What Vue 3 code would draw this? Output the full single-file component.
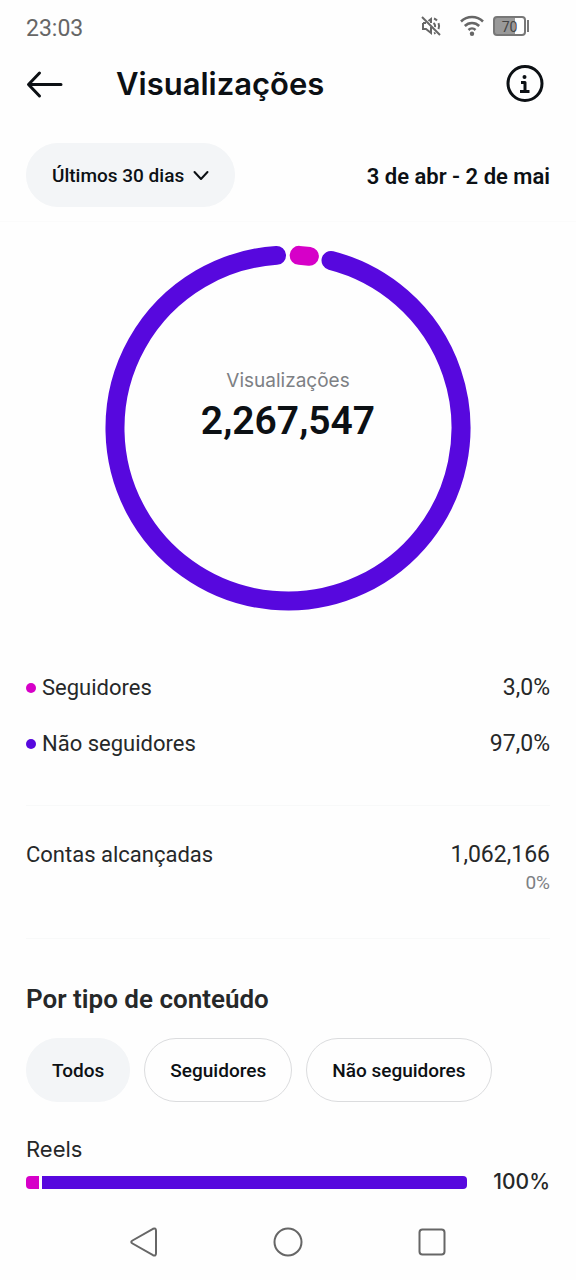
<script setup>
import { ref } from 'vue'

const title = 'Visualizações'
const total = '2,267,547'
const legend = [
  { name: 'Seguidores', value: '3,0%', tone: 'pink' },
  { name: 'Não seguidores', value: '97,0%', tone: 'violet' },
]
const tabs = ['Todos', 'Seguidores', 'Não seguidores']
const activeTab = ref('Todos')
const reels = { followers: 3, others: 97 }

const radius = 173
function arc(from, to) {
  const point = (deg) => {
    const a = (deg * Math.PI) / 180
    return `${(183 + radius * Math.sin(a)).toFixed(2)} ${(183 - radius * Math.cos(a)).toFixed(2)}`
  }
  const large = to - from > 180 ? 1 : 0
  return `M${point(from)}A${radius} ${radius} 0 ${large} 1 ${point(to)}`
}
</script>

<template>
  <div class="screen">
    <div class="status">
      <span class="clock">23:03</span>
      <div class="indicators">
        <svg class="mute" viewBox="0 0 22 22" width="22" height="22" aria-hidden="true">
          <path d="M3 8v6h3l5 4V12M11 8V4L8.500 6M3 8h3" />
          <path d="M13.500 8a4 4 0 0 1 1.500 4M14 3.500a8 8 0 0 1 3 2M18.500 8a8 8 0 0 1 0 6M14 18.500l1.500-.7" />
          <path d="M2 2l18 18" />
        </svg>
        <svg class="wifi" viewBox="0 0 24 22" width="24" height="22" aria-hidden="true">
          <path d="M1 6.500a15.500 15.500 0 0 1 22 0M4.800 11a10.200 10.200 0 0 1 14.400 0M8.500 15a5 5 0 0 1 7 0" />
          <circle cx="12" cy="18.700" r="2.200" />
        </svg>
        <div class="battery"><span class="cell">70</span></div>
      </div>
    </div>

    <header class="header">
      <button class="icon-button" type="button" aria-label="Voltar">
        <svg viewBox="0 0 38 30" width="38" height="30">
          <path class="line" d="M13.500 4L2.500 15.500l11 11.500M3 15.500h32" />
        </svg>
      </button>
      <h1>{{ title }}</h1>
      <button class="icon-button" type="button" aria-label="Informações">
        <svg viewBox="0 0 38 38" width="38" height="38">
          <circle class="line" cx="19" cy="18.500" r="17" />
          <circle cx="18.500" cy="12" r="2" />
          <path class="mark" d="M15 17.500h4V26M14 26.500h9.500" />
        </svg>
      </button>
    </header>

    <div class="filters">
      <button class="chip filled" type="button">
        Últimos 30 dias
        <svg viewBox="0 0 16 12" width="16" height="12" aria-hidden="true">
          <path d="M1.500 2L8 9l6.500-7" />
        </svg>
      </button>
      <strong class="range">3 de abr - 2 de mai</strong>
    </div>

    <main>
      <section class="chart">
        <svg viewBox="0 0 366 366" role="img" aria-label="Visualizações por público">
          <path class="violet" :d="arc(14.4, 356.2)" />
          <path class="pink" :d="arc(3.7, 7.1)" />
        </svg>
        <div class="summary">
          <span class="caption">{{ title }}</span>
          <strong class="total">{{ total }}</strong>
        </div>
      </section>

      <ul class="legend">
        <li v-for="item in legend" :key="item.name">
          <span class="name"><i class="dot" :class="item.tone"></i>{{ item.name }}</span>
          <span class="value">{{ item.value }}</span>
        </li>
      </ul>

      <section class="reach">
        <span>Contas alcançadas</span>
        <div class="figures">
          <span class="value">1,062,166</span>
          <small>0%</small>
        </div>
      </section>

      <section class="types">
        <h2>Por tipo de conteúdo</h2>
        <div class="tabs">
          <button
            v-for="tab in tabs"
            :key="tab"
            type="button"
            class="chip"
            :class="{ filled: tab === activeTab }"
            :aria-pressed="tab === activeTab"
            @click="activeTab = tab"
          >{{ tab }}</button>
        </div>
        <div class="reels">Reels</div>
        <div class="meter">
          <div class="bar">
            <span class="pink" :style="{ flexGrow: reels.followers }"></span>
            <span class="violet" :style="{ flexGrow: reels.others }"></span>
          </div>
          <span class="percent">100%</span>
        </div>
      </section>
    </main>

    <nav class="nav">
      <button type="button" aria-label="Voltar">
        <svg viewBox="0 0 32 32" width="32" height="32">
          <path d="M25 2.800L4.500 14.500q-2.500 1.500 0 3L25 29.200q3 1.200 3-2V4.800q0-3.200-3-2z" />
        </svg>
      </button>
      <button type="button" aria-label="Início">
        <svg viewBox="0 0 32 32" width="32" height="32"><circle cx="16" cy="16" r="13.500" /></svg>
      </button>
      <button type="button" aria-label="Recentes">
        <svg viewBox="0 0 32 32" width="32" height="32">
          <rect x="3.500" y="3.500" width="25" height="25" rx="3" />
        </svg>
      </button>
    </nav>
  </div>
</template>

<style>
body {
  background: #fefefe;
}
</style>

<style scoped>
.screen {
  color: #262829;
  font: 400 22px/28px Roboto, "Liberation Sans", sans-serif;
}
button {
  border: 0;
  background: none;
  padding: 0;
  color: #0c1014;
  font: inherit;
  cursor: pointer;
}
svg {
  display: block;
  fill: none;
}
h1, h2, ul {
  margin: 0;
  padding: 0;
}
.status {
  display: flex;
  justify-content: space-between;
  height: 41px;
  padding: 15px 50px 0 26px;
  color: #666;
}
.clock {
  font-size: 23px;
}
.indicators {
  display: flex;
  align-items: center;
  height: 22px;
}
.mute, .wifi {
  stroke: #666;
  stroke-width: 2;
}
.mute {
  margin-right: 18px;
}
.wifi {
  margin-right: 9px;
  stroke-width: 2.5;
}
.wifi circle {
  fill: #666;
  stroke: none;
}
.battery {
  position: relative;
  box-sizing: border-box;
  width: 33px;
  height: 20px;
  border: 2px solid #777;
  border-radius: 4px;
  background: linear-gradient(90deg, #999 70%, #fefefe 70%);
  text-align: center;
}
.battery::after {
  content: "";
  position: absolute;
  top: 2px;
  right: -5px;
  width: 2px;
  height: 12px;
  background: #777;
}
.cell {
  display: block;
  color: #444;
  font-size: 14px;
  line-height: 18px;
}
.header {
  display: flex;
  align-items: center;
  height: 56px;
  padding: 0 32px 0 26px;
}
.header h1 {
  flex: 1;
  padding-left: 52px;
  color: #0c1014;
  font: 600 31px/40px Inter, Roboto, sans-serif;
}
.icon-button svg {
  fill: #0c1014;
}
.icon-button .line, .icon-button .mark {
  fill: none;
  stroke: #0c1014;
  stroke-width: 3;
  stroke-linecap: round;
  stroke-linejoin: round;
}
.icon-button .mark {
  stroke-linecap: butt;
}
.filters {
  display: flex;
  align-items: center;
  justify-content: space-between;
  padding: 31px 26px 14px;
  border-bottom: 1px solid #fbfbfb;
}
.chip {
  display: flex;
  align-items: center;
  gap: 9px;
  box-sizing: border-box;
  height: 64px;
  padding: 2px 25px 0;
  border: 1px solid #dbdcde;
  border-radius: 32px;
  font-size: 19px;
  font-weight: 500;
  white-space: nowrap;
}
.chip.filled {
  border-color: #f3f5f7;
  background: #f3f5f7;
}
.chip svg {
  stroke: #0c1014;
  stroke-width: 2;
  stroke-linecap: round;
  stroke-linejoin: round;
}
.range {
  padding-top: 3px;
  color: #0c1014;
  font-size: 22px;
  font-weight: 600;
}
main {
  padding: 0 26px;
}
.chart {
  display: grid;
  justify-items: center;
  margin-top: 23px;
}
.chart > * {
  grid-area: 1 / 1;
}
.chart svg {
  width: 366px;
  max-width: 100%;
  stroke-width: 19;
  stroke-linecap: round;
}
.chart .violet {
  stroke: #5708de;
}
.chart .pink {
  stroke: #d600c8;
}
.summary {
  display: flex;
  flex-direction: column;
  align-items: center;
  align-self: center;
  padding-bottom: 42px;
}
.caption {
  color: #7d8084;
  font: 400 19px/28px Inter, Roboto, sans-serif;
}
.total {
  color: #0c1014;
  font: 600 39px/52px Roboto, sans-serif;
}
.legend {
  padding: 49px 0 33px;
  border-bottom: 1px solid #f8f9f9;
  list-style: none;
}
.legend li {
  display: flex;
  align-items: center;
  justify-content: space-between;
  height: 56px;
}
.name {
  display: flex;
  align-items: center;
  gap: 6px;
}
.value {
  font-size: 23px;
}
.dot {
  width: 10px;
  height: 10px;
  border-radius: 50%;
}
.dot.pink, .bar .pink {
  background: #d600c8;
}
.dot.violet, .bar .violet {
  background: #5708de;
}
.reach {
  display: flex;
  justify-content: space-between;
  padding: 35px 0 41px;
  border-bottom: 1px solid #f8f9f9;
}
.figures {
  display: flex;
  flex-direction: column;
  align-items: flex-end;
}
.figures small {
  color: #7d8084;
  font-size: 19px;
}
.types h2 {
  padding: 44px 0 23px;
  font-size: 26px;
  font-weight: 600;
  line-height: 32px;
}
.tabs {
  display: flex;
  flex-wrap: wrap;
  gap: 14px;
}
.reels {
  padding-top: 33px;
  font: 400 22px/28px Inter, Roboto, sans-serif;
}
.meter {
  display: flex;
  align-items: center;
  gap: 26px;
  padding-top: 5px;
}
.bar {
  display: flex;
  flex: 1;
  gap: 3px;
  height: 13px;
  overflow: hidden;
  border-radius: 4px;
}
.percent {
  font: 500 21px/28px Inter, Roboto, sans-serif;
}
.nav {
  display: grid;
  grid-template-columns: repeat(3, 1fr);
  justify-items: center;
  padding: 30px 12.5% 21px;
}
.nav svg {
  stroke: #666;
  stroke-width: 2;
}
</style>
